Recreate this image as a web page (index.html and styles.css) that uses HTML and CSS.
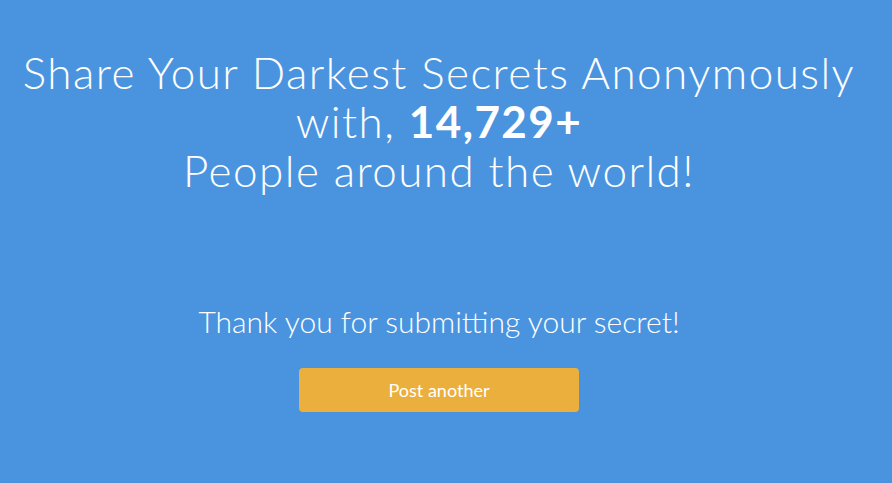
FILE: index.html
```html
<!DOCTYPE html>
<html lang="en">
<head>
<meta charset="utf-8">
<title>Share Your Darkest Secrets</title>
<link rel="stylesheet" href="styles.css">
</head>
<body>
<main class="page">
  <h1 class="headline">Share Your Darkest Secrets Anonymously with, <strong class="count">14,729+</strong><br>People around the world!</h1>
  <section class="thanks">
    <p class="thanks-text">Thank you for submitting your secret!</p>
    <button class="btn-post" type="button">Post another</button>
  </section>
</main>
</body>
</html>
```

FILE: styles.css
```css
html, body {
  margin: 0;
  padding: 0;
  height: 100%;
}

body {
  background: #4a94df;
  color: #ffffff;
  font-family: Lato, "Open Sans", sans-serif;
}

.page {
  padding: 48px 14px 0 0;
  text-align: center;
}

.headline {
  margin: 0 auto;
  max-width: 860px;
  font-size: 44px;
  font-weight: 300;
  letter-spacing: 1.45px;
  line-height: 49px;
}

.count {
  font-weight: 700;
}

.thanks {
  margin-top: 108px;
  display: flex;
  flex-direction: column;
  align-items: center;
}

.thanks-text {
  margin: 0;
  font-size: 30px;
  font-weight: 300;
  line-height: 36px;
}

.btn-post {
  margin-top: 29px;
  width: 280px;
  height: 44px;
  border: none;
  border-radius: 4px;
  background: #eaaf3c;
  color: #ffffff;
  font-family: Lato, sans-serif;
  font-size: 18px;
  font-weight: 400;
  cursor: pointer;
}
```
